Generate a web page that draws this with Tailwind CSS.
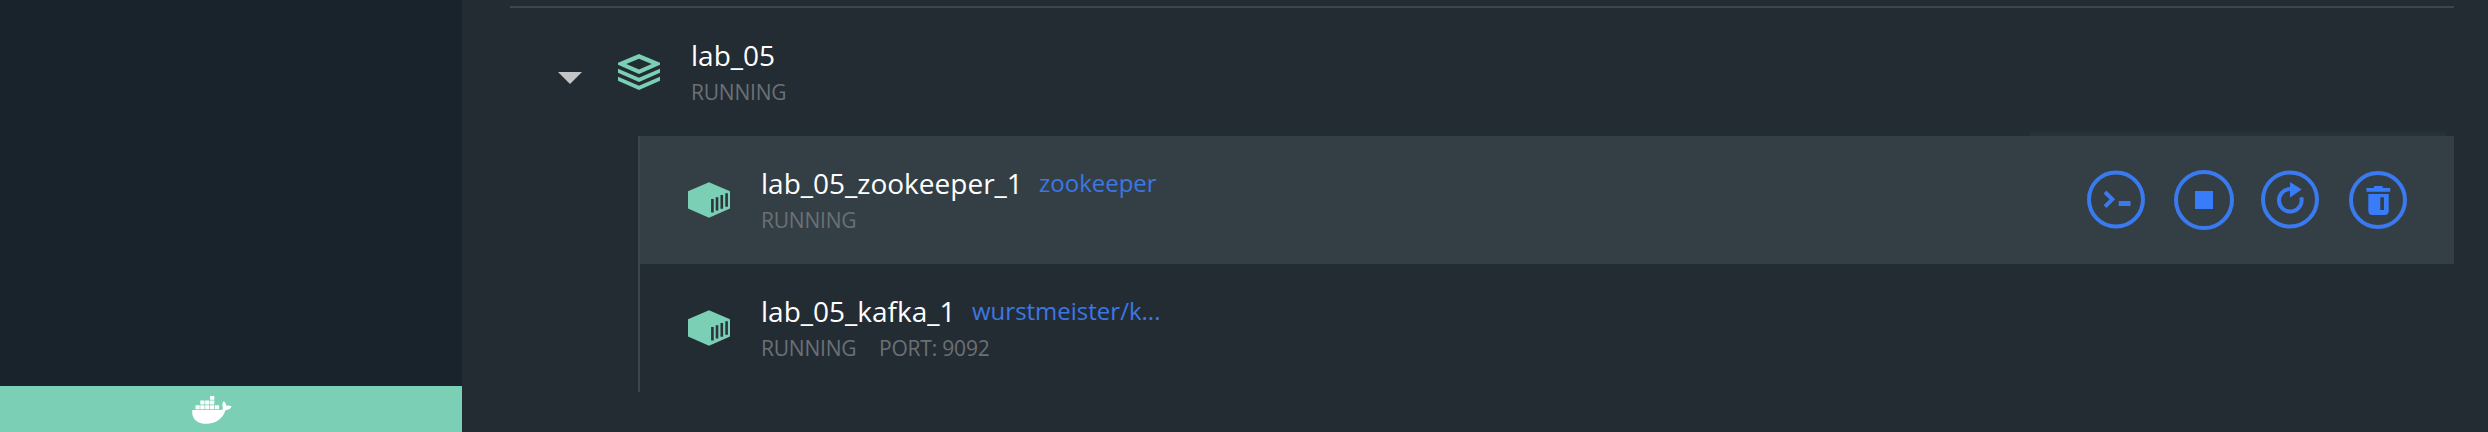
<!DOCTYPE html>
<html lang="en">
<head>
<meta charset="utf-8">
<title>Containers</title>
<script src="https://cdn.jsdelivr.net/npm/@tailwindcss/browser@4"></script>
</head>
<body class="flex h-[432px] w-[2488px] overflow-hidden bg-[#242c33] font-['Open_Sans',sans-serif] text-white">
<svg class="hidden">
  <symbol id="container" viewBox="0 0 42 36">
    <path d="M21 0.3 42 9.3V26.5L21 35.8 0 26.5V9.3Z" fill="#7acfb5"/>
    <path d="M24.4 17v13.6M29 15.2v13.4M33.8 13.1v13.6M38.6 11.2v13.6" stroke="#29353b" stroke-width="2.6"/>
  </symbol>
</svg>
<aside class="flex w-[462px] shrink-0 flex-col bg-[#19232b]">
  <div class="flex-1"></div>
  <footer class="flex h-[46px] items-start bg-[#7acfb5] pt-2.5 pl-48">
    <svg class="h-7 w-10" viewBox="0 0 40 28" fill="#fff">
      <path d="M0.3 14H29.8C31 13 31.200 12.200 30.600 10.400 30 8.300 30.300 6.700 31.900 5.200 33.400 6.500 34 8 34.100 9.800 36.200 9.300 38.200 9.500 39.700 10.400 38.600 12.800 36.500 13.800 33.600 14.100 30.500 23 24 27.800 14.500 27.800 5 27.800-0.700 22.500 0.300 14Z"/>
      <path d="M3.500 9.200h4.200v4H3.500zM8.300 9.200h4.200v4H8.300zM13.200 9.200h4.200v4h-4.200zM18.100 9.200h4.200v4h-4.200zM23 9.200h4.200v4H23zM8.300 4.500h4.200v4H8.300zM13.200 4.500h4.200v4h-4.200zM18.100 4.500h4.200v4h-4.200zM18.100 0h4.200v3.800h-4.200z"/>
    </svg>
  </footer>
</aside>
<main class="flex-1 pt-1.5 pr-[34px] pl-12">
  <section class="border-t-2 border-[#3d454d]">
    <header class="flex h-32 pt-7 pl-12">
      <svg class="mt-9 h-3 w-6" viewBox="0 0 24 12"><path d="M0 0h24L12 12Z" fill="#c5c5c5"/></svg>
      <svg class="mt-[18px] ml-9 h-9 w-[42px]" viewBox="0 0 42 36" fill="#7acfb5">
        <path fill-rule="evenodd" d="M21 0 42 8.800V10.800L21 20 0 10.800V8.800ZM21 4.700 8.300 10 21 15.500 33.700 10Z"/>
        <path d="M0 14.700 21 23.800 42 14.700V18.800L21 28 0 18.800ZM0 22.700 21 31.800 42 22.700V26.800L21 36 0 26.800Z"/>
      </svg>
      <div class="ml-[31px]">
        <h2 class="h-[38px] text-[28px] leading-[38px]">lab_05</h2>
        <p class="mt-1 text-[21px] leading-7 tracking-[-0.2px] text-[#6a7076]">RUNNING</p>
      </div>
    </header>
    <ul class="ml-32">
      <li class="relative flex h-32 border-l-2 border-[#3d454d] bg-[#343f45] pt-7 pl-12">
        <div class="absolute -top-1.5 right-2 left-[1390px] h-1.5 bg-linear-to-b from-[#242c33] to-[#29343a]"></div>
        <svg class="mt-[18px] h-9 w-[42px]"><use href="#container"/></svg>
        <div class="ml-[31px]">
          <div class="flex h-[38px] leading-[38px]">
            <h3 class="w-[278px] text-[28px]">lab_05_zookeeper_1</h3>
            <a class="text-[24px] text-[#3b77e6]">zookeeper</a>
          </div>
          <p class="mt-1 text-[21px] leading-7 tracking-[-0.2px] text-[#6a7076]">RUNNING</p>
        </div>
        <div class="mt-1.5 mr-[46px] ml-auto flex gap-7">
          <svg class="h-15 w-15" viewBox="0 0 60 60" fill="none" stroke="#3a7af0" stroke-width="4"><circle cx="30" cy="29.500" r="27"/><path d="M19 22 26.300 29.300 19 36.600"/><path d="M32.700 33.500H44.500" stroke-width="5"/></svg>
          <svg class="h-15 w-15" viewBox="0 0 60 60" fill="none" stroke="#3a7af0" stroke-width="4"><circle cx="30" cy="30" r="28"/><path d="M21 21h18v18H21z" fill="#387cfa" stroke="none"/></svg>
          <svg class="-ml-0.5 h-15 w-15" viewBox="0 0 60 60" fill="none" stroke="#3a7af0" stroke-width="4"><circle cx="30" cy="29.500" r="27"/><path d="M30 19A11.300 11.300 0 1 0 41.200 27.300"/><path d="M30 12 41.700 19.500 30 27.500Z" fill="#387cfa" stroke="none"/></svg>
          <svg class="h-15 w-15" viewBox="0 0 60 60" fill="none" stroke="#3a7af0" stroke-width="4"><circle cx="30" cy="30" r="27"/><path fill-rule="evenodd" d="M18.500 18H26V16.500Q26 16 26.700 16H34Q34.700 16 34.700 16.500V18H42.200V21.700H18.500ZM20.300 24H40.700V40.500Q40.700 45 36.500 45H24.500Q20.300 45 20.300 40.500ZM32.300 27.300V40H36V27.300Z" fill="#387cfa" stroke="none"/></svg>
        </div>
      </li>
      <li class="flex h-32 border-l-2 border-[#3d454d] pt-7 pl-12">
        <svg class="mt-[18px] h-9 w-[42px]"><use href="#container"/></svg>
        <div class="ml-[31px]">
          <div class="flex h-[38px] leading-[38px]">
            <h3 class="w-[211px] text-[28px]">lab_05_kafka_1</h3>
            <a class="text-[24px] text-[#3b77e6]">wurstmeister/k...</a>
          </div>
          <p class="mt-1 flex text-[21px] leading-7 tracking-[-0.2px] text-[#6a7076]"><span class="w-[118px]">RUNNING</span><span>PORT: 9092</span></p>
        </div>
      </li>
    </ul>
  </section>
</main>
</body>
</html>
